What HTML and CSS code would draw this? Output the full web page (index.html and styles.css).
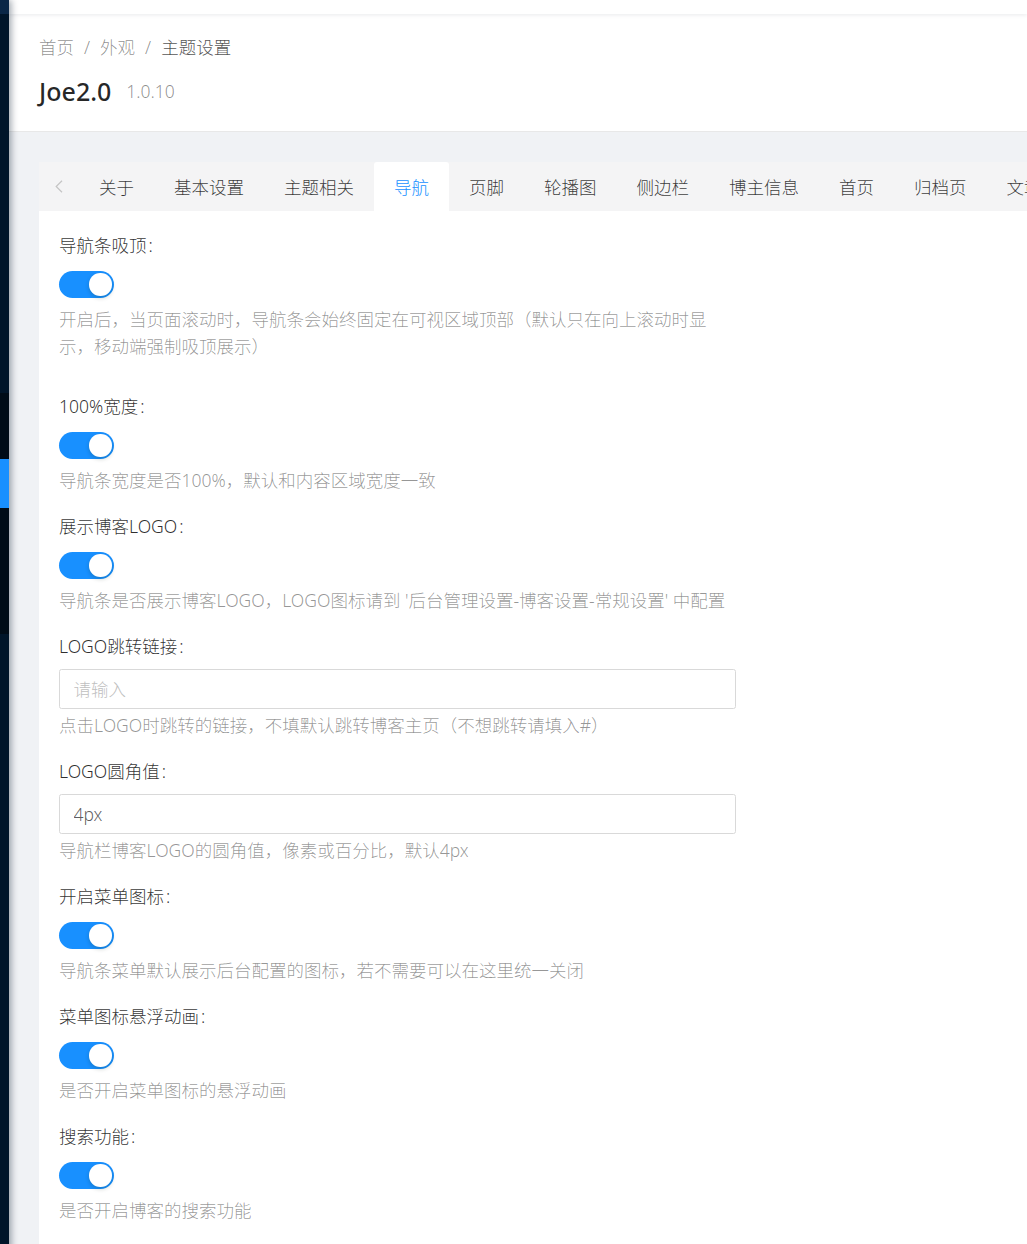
FILE: index.html
```html
<!DOCTYPE html>
<html lang="zh-CN">
<head>
<meta charset="utf-8">
<title>主题设置</title>
<link rel="stylesheet" href="styles.css">
</head>
<body>
<div class="layout">
  <aside class="sider">
    <div class="sider-logo"></div>
    <div class="sider-menu"></div>
    <div class="sider-sub">
      <div class="sider-sub-top"></div>
      <div class="sider-active"></div>
      <div class="sider-sub-bottom"></div>
    </div>
    <div class="sider-rest"></div>
  </aside>
  <main class="main">
    <div class="topbar"></div>
    <header class="page-header">
      <nav class="breadcrumb">
        <span class="crumb">首页</span><span class="crumb-sep">/</span><span class="crumb">外观</span><span class="crumb-sep">/</span><span class="crumb crumb--current">主题设置</span>
      </nav>
      <div class="title-row">
        <span class="title">Joe2.0</span><span class="subtitle">1.0.10</span>
      </div>
    </header>
    <div class="content">
      <div class="card">
        <div class="tabs">
          <span class="tabs-prev">
            <svg width="8" height="13" viewBox="0 0 8 13"><polyline points="7,0.8 1.2,6.5 7,12.2" fill="none" stroke="#c4c4c4" stroke-width="1.2"/></svg>
          </span>
          <span class="tab">关于</span>
          <span class="tab">基本设置</span>
          <span class="tab">主题相关</span>
          <span class="tab tab--active">导航</span>
          <span class="tab">页脚</span>
          <span class="tab">轮播图</span>
          <span class="tab">侧边栏</span>
          <span class="tab">博主信息</span>
          <span class="tab">首页</span>
          <span class="tab">归档页</span>
          <span class="tab">文章页</span>
        </div>
        <form class="form">
          <div class="field field--first">
            <div class="field-label">导航条吸顶<span class="colon">:</span></div>
            <span class="switch"><span class="switch-knob"></span></span>
            <div class="extra extra--narrow">开启后，当页面滚动时，导航条会始终固定在可视区域顶部（默认只在向上滚动时显示，移动端强制吸顶展示）</div>
          </div>
          <div class="field">
            <div class="field-label">100%宽度<span class="colon">:</span></div>
            <span class="switch"><span class="switch-knob"></span></span>
            <div class="extra">导航条宽度是否100%，默认和内容区域宽度一致</div>
          </div>
          <div class="field">
            <div class="field-label">展示博客LOGO<span class="colon">:</span></div>
            <span class="switch"><span class="switch-knob"></span></span>
            <div class="extra">导航条是否展示博客LOGO，LOGO图标请到 '后台管理设置-博客设置-常规设置' 中配置</div>
          </div>
          <div class="field">
            <div class="field-label">LOGO跳转链接<span class="colon">:</span></div>
            <input class="input" type="text" placeholder="请输入">
            <div class="extra extra--input">点击LOGO时跳转的链接，不填默认跳转博客主页（不想跳转请填入#）</div>
          </div>
          <div class="field">
            <div class="field-label">LOGO圆角值<span class="colon">:</span></div>
            <input class="input" type="text" value="4px">
            <div class="extra extra--input">导航栏博客LOGO的圆角值，像素或百分比，默认4px</div>
          </div>
          <div class="field">
            <div class="field-label">开启菜单图标<span class="colon">:</span></div>
            <span class="switch"><span class="switch-knob"></span></span>
            <div class="extra">导航条菜单默认展示后台配置的图标，若不需要可以在这里统一关闭</div>
          </div>
          <div class="field">
            <div class="field-label">菜单图标悬浮动画<span class="colon">:</span></div>
            <span class="switch"><span class="switch-knob"></span></span>
            <div class="extra">是否开启菜单图标的悬浮动画</div>
          </div>
          <div class="field">
            <div class="field-label">搜索功能<span class="colon">:</span></div>
            <span class="switch"><span class="switch-knob"></span></span>
            <div class="extra">是否开启博客的搜索功能</div>
          </div>
        </form>
      </div>
    </div>
  </main>
</div>
</body>
</html>
```
FILE: styles.css
```css
* { box-sizing: border-box; }
html, body { margin: 0; padding: 0; }
body {
  font-family: "Noto Sans", "Noto Sans CJK SC", sans-serif;
  font-size: 17.5px;
  font-weight: 300;
  color: rgba(0, 0, 0, 0.85);
  background: #f0f2f5;
}
.layout {
  display: flex;
  min-height: 100vh;
  overflow: hidden;
}
.sider {
  width: 9px;
  flex-shrink: 0;
  display: flex;
  flex-direction: column;
  background: #001529;
  box-shadow: 2px 0 7px rgba(0, 21, 41, 0.4);
  position: relative;
  z-index: 3;
}
.sider-logo { height: 14px; background: #0a2747; }
.sider-menu { height: 379px; background: #001529; }
.sider-sub { display: flex; flex-direction: column; background: #000c17; }
.sider-sub-top { height: 66px; }
.sider-active { height: 49px; background: #1890ff; }
.sider-sub-bottom { height: 126px; }
.sider-rest { flex: 1; background: #001529; }

.main {
  flex: 1;
  min-width: 0;
  overflow: hidden;
  display: flex;
  flex-direction: column;
}
.topbar {
  height: 14px;
  background: #fff;
  box-shadow: 0 1px 4px rgba(0, 21, 41, 0.09);
  position: relative;
  z-index: 2;
}
.page-header {
  background: #fff;
  padding: 20px 30px 20px;
  border-bottom: 1px solid #e8e8e8;
}
.breadcrumb {
  display: flex;
  align-items: center;
  line-height: 27.5px;
  height: 27.5px;
  color: rgba(0, 0, 0, 0.45);
}
.crumb-sep { margin: 0 10px; }
.crumb--current { color: rgba(0, 0, 0, 0.7); }
.title-row {
  display: flex;
  align-items: center;
  margin-top: 9px;
  height: 40px;
}
.title {
  font-size: 25px;
  font-weight: 500;
  line-height: 40px;
  color: rgba(0, 0, 0, 0.85);
}
.subtitle {
  margin-left: 15px;
  color: rgba(0, 0, 0, 0.45);
  line-height: 27.5px;
  padding-top: 2px;
}

.content {
  flex: 1;
  padding: 30px 0 0 30px;
}
.card {
  width: 1150px;
  background: #fff;
  min-height: 1100px;
}
.tabs {
  display: flex;
  height: 49px;
  background: #f4f4f5;
  align-items: stretch;
}
.tabs-prev {
  width: 40px;
  flex-shrink: 0;
  display: flex;
  align-items: center;
  justify-content: center;
  padding-top: 1px;
}
.tab {
  flex-shrink: 0;
  padding: 1px 20px 0;
  line-height: 48px;
  white-space: nowrap;
  color: rgba(0, 0, 0, 0.78);
}
.tab--active {
  background: #fff;
  color: #1890ff;
  border-radius: 3px 3px 0 0;
}

.form {
  padding: 21px 20px 0;
}
.field {
  margin-bottom: 18.5px;
}
.field--first { margin-bottom: 32px; }
.field-label {
  line-height: 27.5px;
  height: 27.5px;
  color: rgba(0, 0, 0, 0.82);
  white-space: nowrap;
}
.colon { margin-left: 2px; }
.switch {
  display: block;
  position: relative;
  width: 55px;
  height: 27.5px;
  margin-top: 11.5px;
  border-radius: 14px;
  background: #1890ff;
}
.switch-knob {
  position: absolute;
  top: 2.5px;
  right: 2.5px;
  width: 22.5px;
  height: 22.5px;
  border-radius: 50%;
  background: #fff;
  box-shadow: 0 2px 4px rgba(0, 35, 11, 0.2);
}
.extra {
  margin-top: 7.5px;
  line-height: 27.5px;
  color: rgba(0, 0, 0, 0.42);
}
.extra--narrow { max-width: 655px; }
.extra--input { margin-top: 2.25px; }
.input {
  display: block;
  width: 677px;
  height: 40px;
  margin-top: 9.25px;
  padding: 0 13.5px;
  border: 1px solid #d9d9d9;
  border-radius: 2.5px;
  font-family: inherit;
  font-size: 17.5px;
  font-weight: 300;
  color: rgba(0, 0, 0, 0.65);
  background: #fff;
  outline: none;
}
.input::placeholder { color: #bfbfbf; }
```
